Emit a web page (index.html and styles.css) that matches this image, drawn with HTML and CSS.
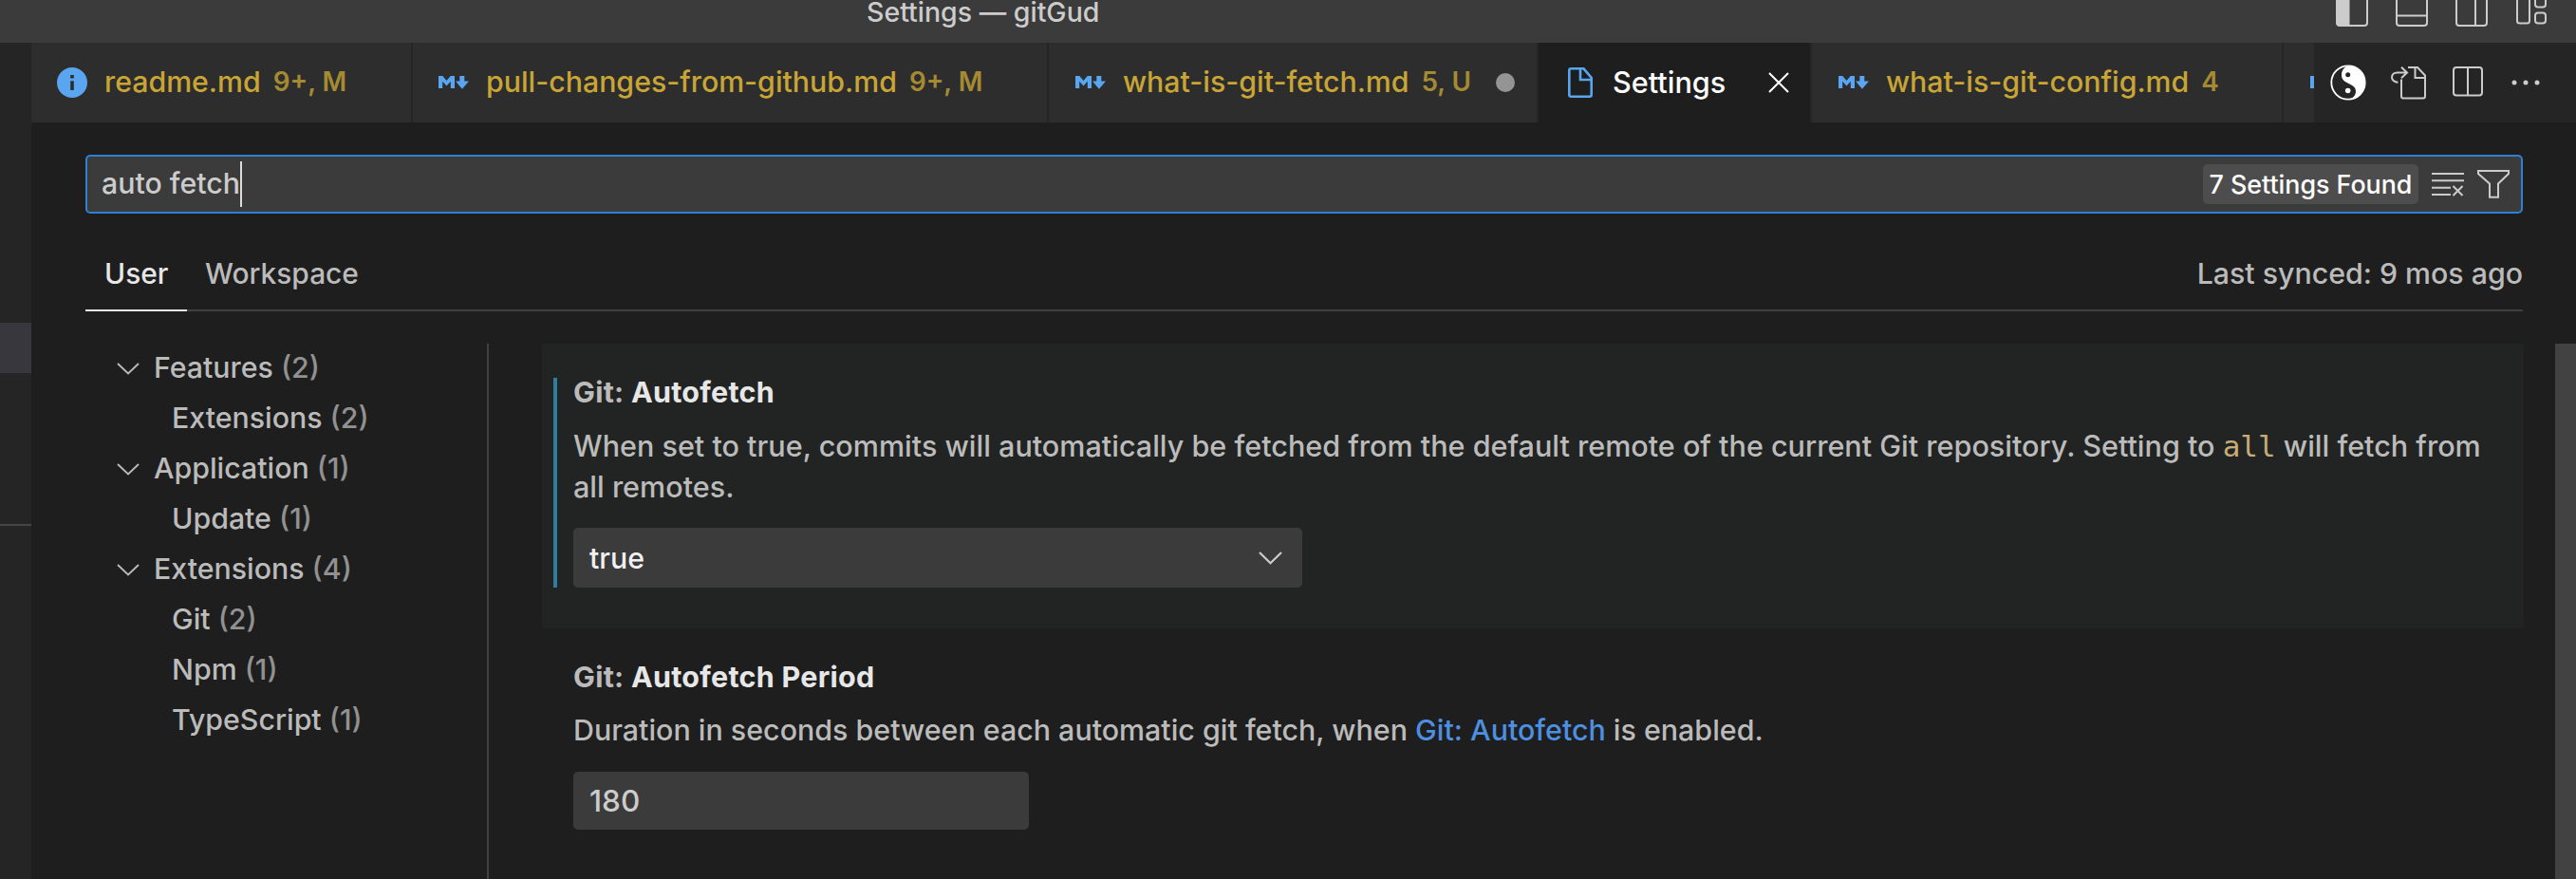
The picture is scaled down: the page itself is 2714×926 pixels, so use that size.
FILE: index.html
```html
<!DOCTYPE html>
<html lang="en">
<head>
<meta charset="utf-8">
<title>Settings — gitGud</title>
<link rel="stylesheet" href="styles.css">
</head>
<body>
<svg class="defs" aria-hidden="true">
  <symbol id="md" viewBox="0 0 32 14"><path d="M0 13V0h4.300l4.200 5 4.200-5H17v13h-4.200V5.800L8.500 10.500 4.200 5.800V13zM22.300 0h5v5.500H32l-7.100 8.300L18 5.500h4.300z" fill="#5aa5f0"/></symbol>
  <symbol id="chev" viewBox="0 0 24 13"><path d="M1 1l11 10.500L23 1" fill="none" stroke="currentColor" stroke-width="1.900"/></symbol>
</svg>
<header class="titlebar">
  <h1 class="title">Settings — gitGud</h1>
  <div class="layout-icons">
    <svg width="34" height="28" viewBox="0 0 34 28"><rect x="1" y="-6" width="32" height="33" rx="3" fill="none" stroke="#ccc" stroke-width="2"/><path d="M1-6h13.500v33H3l-2-2z" fill="#ccc"/></svg>
    <svg width="34" height="28" viewBox="0 0 34 28"><path d="M1-6v30q0 3 3 3h26q3 0 3-3V-6M1 16.500h32" fill="none" stroke="#ccc" stroke-width="2"/></svg>
    <svg width="34" height="28" viewBox="0 0 34 28"><path d="M1-6v30q0 3 3 3h26q3 0 3-3V-6M21 0v27" fill="none" stroke="#ccc" stroke-width="2"/></svg>
    <svg width="34" height="28" viewBox="0 0 34 28"><g fill="none" stroke="#ccc" stroke-width="2"><rect x="2" y="-6" width="13" height="30.500" rx="2.500"/><rect x="21" y="-6" width="11" height="13.500" rx="3"/><rect x="21" y="13.500" width="11" height="11" rx="3"/></g></svg>
  </div>
</header>
<div class="workbench">
  <aside class="sidebar"><div class="sel"></div><div class="rule"></div></aside>
  <main class="editor">
    <nav class="tabs">
      <div class="tab t1"><svg class="info" width="32" height="32" viewBox="0 0 32 32"><circle cx="16" cy="16" r="16" fill="#5aa5f0"/><path d="M14.200 8h3.600v3.500h-3.600zM14.200 14.300h3.600V24h-3.600z" fill="#2d2d2d"/></svg><span class="name">readme.md</span><span class="badge">9+, M</span></div>
      <div class="tab t2"><svg class="md"><use href="#md"/></svg><span class="name">pull-changes-from-github.md</span><span class="badge">9+, M</span></div>
      <div class="tab t3"><svg class="md"><use href="#md"/></svg><span class="name">what-is-git-fetch.md</span><span class="badge">5, U</span><span class="dirty"></span></div>
      <div class="tab active"><svg class="file" width="26" height="32" viewBox="0 0 26 32"><path d="M3 1.300h13.500L24.700 11v17.700q0 2-2 2H3.300q-2 0-2-2V3.300q0-2 2-2zM13 1.300V13h11.700" fill="none" stroke="#5aa5f0" stroke-width="2.600"/></svg><span class="name">Settings</span><svg class="close" width="22" height="22" viewBox="0 0 22 22"><path d="M1 1l20 20M21 1L1 21" stroke="#fff" stroke-width="2"/></svg></div>
      <div class="tab t5"><svg class="md"><use href="#md"/></svg><span class="name">what-is-git-config.md</span><span class="badge">4</span></div>
      <div class="tab t6"><svg class="md"><use href="#md"/></svg></div>
      <div class="actions">
        <svg class="yy" width="38" height="38" viewBox="0 0 38 38"><circle cx="19" cy="19" r="17.700" fill="#252526" stroke="#fff" stroke-width="1.800"/><path d="M19 1a18 18 0 0 1 0 36c5-1.500 8-4.500 8-9 0-9-15-6.500-15-17C12 6 15 2.500 19 1z" fill="#fff"/><circle cx="18.700" cy="10.700" r="2.500" fill="#252526"/><circle cx="18.700" cy="27.500" r="2.800" fill="#fff"/></svg>
        <svg class="open" width="37" height="35" viewBox="0 0 37 35"><g fill="none" stroke="#ccc" stroke-width="2"><path d="M7.500 16.700C3.500 16.500 1 14 1 11.500 1 8.500 3.500 6.500 6.500 6.500H17M11 .8l6 5.700-6 5.700M11 13.500v18q0 2 2 2h21q2 0 2-2V9.500L28 1H18M25.500 1v11H36"/></g></svg>
        <svg class="split" width="32" height="32" viewBox="0 0 32 32"><path d="M4 1h24q3 0 3 3v23.500q0 3-3 3H4q-3 0-3-3V4q0-3 3-3zM16 1v29" fill="none" stroke="#ccc" stroke-width="2"/></svg>
        <svg class="more" width="30" height="6" viewBox="0 0 30 6"><g fill="#ccc"><circle cx="3" cy="3" r="2.500"/><circle cx="15" cy="3" r="2.500"/><circle cx="27" cy="3" r="2.500"/></g></svg>
      </div>
    </nav>
    <div class="search">
      <span class="query">auto fetch</span><span class="caret"></span>
      <span class="found">7 Settings Found</span>
      <svg class="clear" width="34" height="26" viewBox="0 0 34 26"><path d="M0 2h34M0 9.200h34M0 16.700h20M0 24h20M22.500 15l10 10M32.500 15l-10 10" stroke="#ccc" stroke-width="2" fill="none"/></svg>
      <svg class="filter" width="34" height="30" viewBox="0 0 34 30"><path d="M1 1h32v3L22 14.500V28.800h-9V14.500L1 4z" stroke="#ccc" stroke-width="2" fill="none"/></svg>
    </div>
    <div class="scopes"><span class="scope on"><span>User</span></span><span class="scope ws">Workspace</span><span class="sync">Last synced: 9 mos ago</span></div>
    <div class="body">
      <ul class="toc">
        <li><svg><use href="#chev"/></svg><span>Features <i>(2)</i></span></li>
        <li class="sub"><span>Extensions <i>(2)</i></span></li>
        <li><svg><use href="#chev"/></svg><span>Application <i>(1)</i></span></li>
        <li class="sub"><span>Update <i>(1)</i></span></li>
        <li><svg><use href="#chev"/></svg><span>Extensions <i>(4)</i></span></li>
        <li class="sub"><span>Git <i>(2)</i></span></li>
        <li class="sub"><span>Npm <i>(1)</i></span></li>
        <li class="sub"><span>TypeScript <i>(1)</i></span></li>
      </ul>
      <div class="list">
        <section class="setting focused">
          <div class="bar">
            <h2><b>Git: </b>Autofetch</h2>
            <p class="desc d1">When set to true, commits will automatically be fetched from the default remote of the current Git repository. Setting to <code>all</code> will fetch from<br>all remotes.</p>
            <div class="select"><span>true</span><svg width="25" height="14" viewBox="0 0 25 14"><path d="M1 1l11.500 11.300L24 1" fill="none" stroke="#ccc" stroke-width="2.200"/></svg></div>
          </div>
        </section>
        <section class="setting second">
          <h2><b>Git: </b>Autofetch Period</h2>
          <p class="desc d2">Duration in seconds between each automatic git fetch, when <a>Git: Autofetch</a> is enabled.</p>
          <div class="number">180</div>
        </section>
      </div>
      <div class="scroll"></div>
    </div>
  </main>
</div>
</body>
</html>
```
FILE: styles.css
```css
* { box-sizing: border-box; margin: 0; padding: 0; }
body { width: 2714px; height: 926px; overflow: hidden; background: #1e1e1e; font-family: Inter, sans-serif; font-size: 30.3px; font-weight: 450; color: #bbb; white-space: nowrap; display: flex; flex-direction: column; }
svg { display: block; flex: none; }
.defs { position: absolute; width: 0; height: 0; }
.titlebar { height: 45px; flex: none; background: #3b3b3b; display: flex; align-items: flex-start; }
.title { width: 250px; margin-left: 913px; font-size: 28.500px; font-weight: 450; line-height: 25px; color: #ccc; }
.layout-icons { display: flex; gap: 29px; margin-left: auto; margin-right: 30px; }
.workbench { flex: 1; display: flex; min-height: 0; }
.sidebar { width: 33px; flex: none; background: #252526; padding-top: 295px; }
.sel { height: 53px; background: #37373d; }
.rule { height: 2px; margin-top: 159px; background: #464646; }
.editor { flex: 1; min-width: 0; display: flex; flex-direction: column; }
.tabs { height: 84px; flex: none; display: flex; background: #252526; }
.tab { flex: none; display: flex; align-items: center; background: #2d2d2d; border-right: 2px solid #252526; padding-left: 27px; color: #c8a535; overflow: hidden; }
.name, .badge { padding-bottom: 2px; }
.md { width: 32px; height: 14px; margin-right: 18px; }
.t1 { width: 402px; } .t2 { width: 670px; } .t3 { width: 516px; } .t5 { width: 497px; } .t6 { width: 32px; border: 0; }
.t3, .t5, .t6 { padding-left: 28px; }
.active { width: 288px; background: #1e1e1e; color: #fff; padding-left: 31px; }
.active .name { font-size: 30.600px; }
.info { margin-right: 18px; }
.file { margin-right: 21px; }
.badge { margin-left: 13px; font-size: 27.800px; font-weight: 600; color: #a48a32; }
.dirty { width: 20px; height: 20px; border-radius: 50%; background: #949494; margin-left: auto; margin-right: 23px; }
.close { margin-left: auto; margin-right: 22px; }
.actions { flex: 1; display: flex; align-items: center; padding-left: 17px; }
.open { margin-left: 26px; }
.split { margin-left: 28px; margin-top: -2px; }
.more { margin-left: 30px; }
.search { height: 62px; flex: none; margin: 34px 56px 0 57px; border: 2px solid #2f80d4; border-radius: 5px; background: #3b3b3b; color: #ccc; display: flex; align-items: center; padding-left: 15px; padding-right: 12px; }
.query { padding-bottom: 2px; }
.caret { width: 2px; height: 48px; background: #ddd; }
.found { margin-left: auto; width: 227px; height: 42px; line-height: 42px; border-radius: 5px; background: #4d4d4d; color: #fff; font-size: 26.800px; text-align: center; }
.clear { margin-left: 14px; }
.filter { margin-left: 14px; }
.scopes { height: 103px; flex: none; margin: 0 56px 0 57px; display: flex; align-items: stretch; line-height: 126px; border-bottom: 2px solid #404040; }
.scope { font-size: 29.900px; }
.scope.on { width: 107px; padding-left: 20px; color: #e7e7e7; border-bottom: 2px solid #e7e7e7; height: 103px; }
.ws { margin-left: 19px; }
.sync { margin-left: auto; }
.body { flex: 1; display: flex; padding: 34px 0 0 57px; min-height: 0; }
.toc { width: 425px; flex: none; list-style: none; border-right: 2px solid #404040; }
.toc li { height: 52.900px; display: flex; align-items: center; padding-left: 33px; }
.toc span { padding-bottom: 2px; }
.toc svg { width: 24px; height: 13px; margin-right: 15px; margin-top: 1px; }
.toc .sub { padding-left: 91px; }
.toc i { font-style: normal; color: #919191; }
.list { margin-left: 56px; width: 2088px; flex: none; }
.setting { height: 300px; }
.focused { background: #222423; padding: 36px 0 0 12px; }
.bar { border-left: 4px solid #2f7d9c; height: 221px; padding-left: 17px; }
h2 { font-size: 30.500px; font-weight: 650; letter-spacing: 0.250px; line-height: 30px; color: #e7e7e7; }
h2 b { color: #bbb; font-weight: 650; }
.desc { line-height: 43px; margin-top: 20px; }
.d1 { font-size: 30.550px; }
.d2 { font-size: 30.400px; }
code { font-family: "DejaVu Sans Mono", monospace; font-size: 31px; line-height: 1; color: #c8ac77; }
.select { width: 768px; height: 63px; margin-top: 22px; border-radius: 5px; background: #3b3b3b; color: #f0f0f0; display: flex; align-items: center; justify-content: space-between; padding: 0 21px 0 17px; }
.second { padding: 36px 0 0 33px; }
a { color: #4d8fe0; }
.number { width: 480px; height: 61px; line-height: 61px; margin-top: 22px; padding-left: 17px; border-radius: 5px; background: #3b3b3b; color: #ccc; font-size: 31.500px; }
.scroll { margin-left: auto; width: 22px; background: #424242; }
```
